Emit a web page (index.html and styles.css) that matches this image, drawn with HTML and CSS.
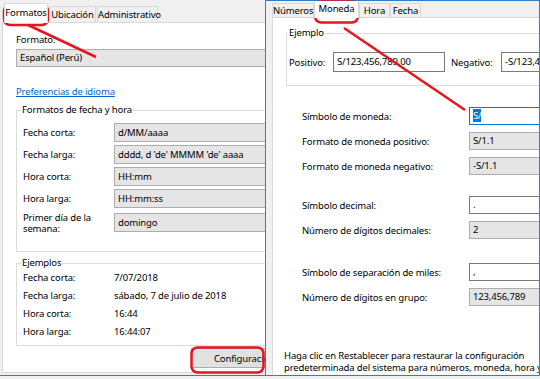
FILE: index.html
```html
<!DOCTYPE html>
<html>
	<head>
		<meta charset="utf-8">
		<title>Región</title>
		<link rel="stylesheet" href="styles.css">
	</head>
	<body>
		<div class="screen">
			<!-- ventana izquierda: Formatos -->
			<div class="win win-left">
				<div class="tabs">
					<div class="tab on" style="width:44px">Formatos</div>
					<div class="tab" style="width:47px">Ubicación</div>
					<div class="tab" style="width:61px">Administrativo</div>
				</div>
				<div class="panel panel-left">
					<p class="caption">Formato:</p>
					<div class="combo wide">Español (Perú)</div>
					<a class="link" href="javascript:;">Preferencias de idioma</a>
					<fieldset class="group g-formats">
						<legend>Formatos de fecha y hora</legend>
						<div class="row"><span class="lbl">Fecha corta:</span><span class="combo">d/MM/aaaa</span></div>
						<div class="row"><span class="lbl">Fecha larga:</span><span class="combo">dddd, d 'de' MMMM 'de' aaaa</span></div>
						<div class="row"><span class="lbl">Hora corta:</span><span class="combo">HH:mm</span></div>
						<div class="row"><span class="lbl">Hora larga:</span><span class="combo">HH:mm:ss</span></div>
						<div class="row two"><span class="lbl">Primer día de la<br>semana:</span><span class="combo">domingo</span></div>
					</fieldset>
					<fieldset class="group g-examples">
						<legend>Ejemplos</legend>
						<div class="ex"><span class="lbl">Fecha corta:</span><span>7/07/2018</span></div>
						<div class="ex"><span class="lbl">Fecha larga:</span><span>sábado, 7 de julio de 2018</span></div>
						<div class="ex"><span class="lbl">Hora corta:</span><span>16:44</span></div>
						<div class="ex"><span class="lbl">Hora larga:</span><span>16:44:07</span></div>
					</fieldset>
					<button class="btn">Configuración adicional...</button>
				</div>
			</div>

			<!-- ventana derecha: Moneda -->
			<div class="win win-right">
				<div class="tabs">
					<div class="tab" style="width:42px">Números</div>
					<div class="tab on" style="width:45px">Moneda</div>
					<div class="tab" style="width:31px">Hora</div>
					<div class="tab" style="width:31px">Fecha</div>
				</div>
				<div class="panel panel-right">
					<fieldset class="group g-sample">
						<legend>Ejemplo</legend>
						<div class="sample">
							<span class="s-lbl">Positivo:</span>
							<span class="edit e-pos">S/123,456,789.00</span>
							<span class="s-lbl s-neg">Negativo:</span>
							<span class="edit e-neg">-S/123,456,789.00</span>
						</div>
					</fieldset>
					<div class="fields">
						<div class="field first"><span class="f-lbl">Símbolo de moneda:</span><span class="edit focus"><span class="sel">S/</span></span></div>
						<div class="field"><span class="f-lbl">Formato de moneda positivo:</span><span class="combo">S/1.1</span></div>
						<div class="field"><span class="f-lbl">Formato de moneda negativo:</span><span class="combo">-S/1.1</span></div>
						<div class="field gap"><span class="f-lbl">Símbolo decimal:</span><span class="edit">.</span></div>
						<div class="field"><span class="f-lbl">Número de dígitos decimales:</span><span class="combo">2</span></div>
						<div class="field gap2"><span class="f-lbl">Símbolo de separación de miles:</span><span class="edit">,</span></div>
						<div class="field"><span class="f-lbl">Número de dígitos en grupo:</span><span class="combo">123,456,789</span></div>
					</div>
					<p class="note">Haga clic en Restablecer para restaurar la configuración<br>predeterminada del sistema para números, moneda, hora y<br>fecha.</p>
				</div>
			</div>
		</div>

		<!-- marcas rojas encima de la captura -->
		<svg class="marks" width="540" height="379" viewBox="0 0 540 379">
			<g fill="none" stroke="#e8141e" stroke-width="2.5">
				<rect x="4" y="5" width="44" height="20" rx="6"/>
				<line x1="28" y1="25" x2="96" y2="57"/>
				<rect x="315" y="1.5" width="43" height="21" rx="6"/>
				<line x1="344" y1="28" x2="465" y2="110"/>
				<rect x="191.5" y="347.5" width="72" height="25" rx="6"/>
			</g>
		</svg>
	</body>
</html>
```

FILE: styles.css
```css
*{
	margin: 0;
	padding: 0;
	box-sizing: border-box;
}
body{
	width: 540px;
	height: 379px;
	background-color: #f0f0f0;
	font-family: "Noto Sans", sans-serif;
	font-size: 9.5px;
	letter-spacing: -0.15px;
	color: #000;
	overflow: hidden;
	position: relative;
}
.screen{
	display: flex;
}
.win{
	height: 376px;
	background-color: #f0f0f0;
	border-bottom: 1px solid #2b7fd3;
	overflow: hidden;
	white-space: nowrap;
}
.win-left{
	width: 266px;
	border-right: 1px solid #2b7fd3;
}
.win-right{
	width: 274px;
	border-top: 1px solid #2b7fd3;
	border-right: 1px solid #2b7fd3;
}

/* pestañas */
.tabs{
	display: flex;
	align-items: flex-end;
	position: relative;
	z-index: 1;
}
.win-left .tabs{
	height: 22px;
	padding-left: 4px;
}
.win-right .tabs{
	height: 16px;
	padding-left: 6px;
}
.tab{
	border: 1px solid #d9d9d9;
	border-bottom: 0;
	background-color: #f0f0f0;
	text-align: center;
	margin-right: 1px;
}
.win-left .tab{
	height: 16px;
	line-height: 15px;
}
.win-right .tab{
	height: 14px;
	line-height: 13px;
	margin-right: 0;
}
.tab.on{
	background-color: #fff;
	margin-bottom: -1px;
}
.win-left .tab.on{
	height: 20px;
	line-height: 17px;
}
.win-right .tab.on{
	height: 18px;
	line-height: 15px;
}

/* panel */
.panel{
	background-color: #fff;
	border: 1px solid #d9d9d9;
}
.panel-left{
	margin-left: 2px;
	width: 330px;
	height: 351px;
	padding: 10px 0 0 13px;
}
.panel-right{
	margin-left: 6px;
	width: 330px;
	height: 400px;
}

/* controles */
.caption{
	line-height: 14px;
}
.combo,
.edit{
	display: block;
	height: 19px;
	line-height: 17px;
	padding: 0 3px;
	overflow: hidden;
}
.combo{
	background-color: #e5e5e5;
	border: 1px solid #adadad;
}
.edit{
	background-color: #fff;
	border: 1px solid #7a7a7a;
}
.edit.focus{
	border-color: #0078d7;
}
.sel{
	background-color: #0078d7;
	color: #fff;
}
.wide{
	margin-top: 2px;
	height: 18px;
	line-height: 16px;
	width: 300px;
}
.link{
	display: block;
	margin-top: 18px;
	line-height: 14px;
	color: #0066cc;
	width: 103px;
}
.group{
	border: 1px solid #dcdcdc;
	width: 300px;
}
.group legend{
	line-height: 14px;
	padding: 0 1px;
}
.g-formats{
	margin-top: 4px;
	padding: 0 0 17px 6px;
}
.g-formats legend,
.g-examples legend{
	margin-left: -2px;
}
.row{
	display: flex;
	align-items: center;
	height: 19px;
	margin-top: 3px;
}
.g-formats .row:first-of-type{
	margin-top: 6px;
}
.row.two{
	height: 23px;
}
.row.two .lbl{
	line-height: 11px;
}
.row .combo{
	width: 200px;
}
.lbl{
	width: 91px;
	flex-shrink: 0;
}
.g-examples{
	margin-top: 4px;
	padding: 0 0 4px 6px;
}
.ex{
	display: flex;
	line-height: 18px;
}
.g-examples .ex:first-of-type{
	margin-top: -1px;
}
.btn{
	display: block;
	margin: 2px 0 0 175px;
	width: 150px;
	height: 20px;
	border: 1px solid #adadad;
	background-color: #e1e1e1;
	font: inherit;
	letter-spacing: inherit;
	text-align: left;
	padding-left: 22px;
}

/* pestaña Moneda */
.g-sample{
	margin: 8px 0 0 13px;
	padding: 0 0 13px 2px;
}
.g-sample legend{
	margin-left: -1px;
}
.sample{
	display: flex;
	align-items: center;
	margin-top: 12px;
}
.s-lbl{
	width: 44px;
}
.s-neg{
	margin-left: 6px;
	width: 50px;
}
.sample .edit{
	height: 20px;
	line-height: 18px;
}
.e-pos{
	width: 112px;
}
.e-neg{
	width: 120px;
}
.fields{
	padding-left: 29px;
}
.field{
	display: flex;
	align-items: center;
	height: 18px;
	margin-top: 7px;
}
.field.first{
	margin-top: 21px;
}
.field.gap{
	margin-top: 21px;
}
.field.gap2{
	margin-top: 24px;
}
.f-lbl{
	width: 167px;
	flex-shrink: 0;
}
.field .combo,
.field .edit{
	width: 100px;
	height: 18px;
	line-height: 16px;
}
.note{
	margin-top: 44px;
	padding-left: 11px;
	line-height: 12px;
}

/* anotaciones */
.marks{
	position: absolute;
	left: 0;
	top: 0;
	pointer-events: none;
}
```
